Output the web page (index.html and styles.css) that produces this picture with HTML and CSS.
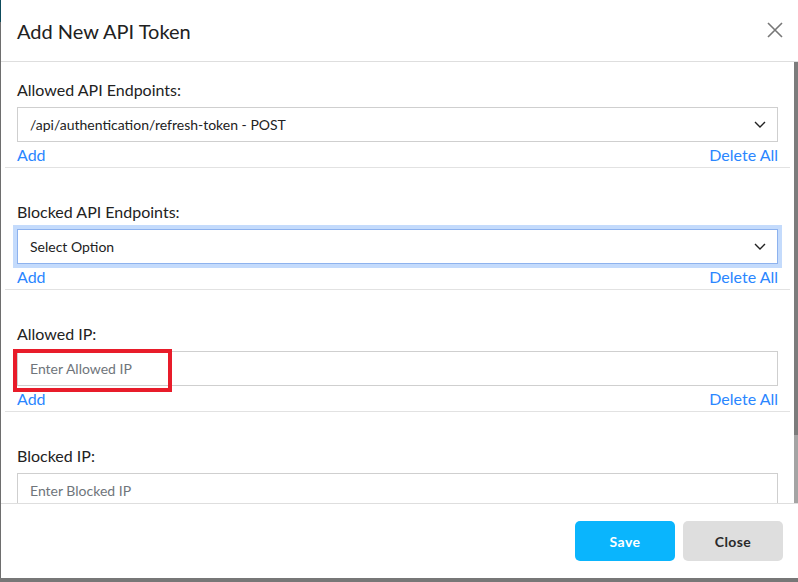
FILE: index.html
```html
<!DOCTYPE html>
<html>
<head>
<meta charset="utf-8">
<link rel="stylesheet" href="styles.css">
</head>
<body>
<div class="page">
  <div class="edge"></div>
  <div class="modal">
    <div class="header">
      <div class="title">Add New API Token</div>
      <svg class="close-x" width="16" height="16" viewBox="0 0 16 16"><path d="M1 1L15 15M15 1L1 15" stroke="#777" stroke-width="1.6" fill="none"/></svg>
    </div>
    <div class="body">
      <div class="content">
        <div class="group first">
          <div class="label">Allowed API Endpoints:</div>
          <div class="field select">
            <span class="value">/api/authentication/refresh-token - POST</span>
            <svg class="chev" width="12" height="7" viewBox="0 0 12 7"><path d="M1 1L6 6L11 1" stroke="#222" stroke-width="1.4" fill="none"/></svg>
          </div>
          <div class="links"><span class="link">Add</span><span class="link">Delete All</span></div>
        </div>
        <div class="group">
          <div class="label">Blocked API Endpoints:</div>
          <div class="field select focus">
            <span class="value">Select Option</span>
            <svg class="chev" width="12" height="7" viewBox="0 0 12 7"><path d="M1 1L6 6L11 1" stroke="#222" stroke-width="1.4" fill="none"/></svg>
          </div>
          <div class="links"><span class="link">Add</span><span class="link">Delete All</span></div>
        </div>
        <div class="group">
          <div class="label">Allowed IP:</div>
          <div class="field input">
            <span class="placeholder">Enter Allowed IP</span>
            <div class="highlight"></div>
          </div>
          <div class="links"><span class="link">Add</span><span class="link">Delete All</span></div>
        </div>
        <div class="group">
          <div class="label">Blocked IP:</div>
          <div class="field input">
            <span class="placeholder">Enter Blocked IP</span>
          </div>
        </div>
      </div>
      <div class="scrollbar"><div class="thumb"></div></div>
    </div>
    <div class="footer">
      <button class="btn save">Save</button>
      <button class="btn close">Close</button>
    </div>
  </div>
</div>
</body>
</html>
```
FILE: styles.css
```css
html, body {
  margin: 0;
  padding: 0;
}
body {
  width: 798px;
  height: 582px;
  overflow: hidden;
  background: #777777;
  font-family: Lato, "Liberation Sans", sans-serif;
  color: #222;
}
.page {
  display: flex;
  height: 578px;
}
.edge {
  width: 1px;
  background: linear-gradient(#0d4b5c 0, #0d4b5c 22px, #6e6e6e 22px);
}
.modal {
  width: 797px;
  height: 578px;
  background: #fff;
  display: flex;
  flex-direction: column;
}
.header {
  height: 61px;
  border-bottom: 1px solid #dedede;
  display: flex;
  align-items: center;
  justify-content: space-between;
  padding: 0 15px 0 16px;
  flex-shrink: 0;
}
.title {
  font-size: 20px;
  color: #212121;
  padding-top: 1px;
}
.close-x {
  margin-top: -2px;
}
.body {
  height: 441px;
  border-bottom: 1px solid #dedede;
  display: flex;
  flex-shrink: 0;
}
.content {
  flex: 1;
  overflow: hidden;
}
.scrollbar {
  width: 4px;
  background: #a4a4a4;
}
.thumb {
  height: 373px;
  background: #7c7c7c;
}
.group {
  margin: 0 4px;
  padding: 34px 12px 0;
  border-bottom: 1px solid #e2e2e2;
}
.group.first {
  padding-top: 18px;
}
.label {
  font-size: 16px;
  line-height: 20px;
  margin-bottom: 7px;
}
.field {
  box-sizing: border-box;
  height: 35px;
  border: 1px solid #cfcfcf;
  display: flex;
  align-items: center;
  padding: 0 11px 0 12px;
  font-size: 14px;
  position: relative;
}
.select {
  justify-content: space-between;
}
.focus {
  border-color: #8db2ee;
  box-shadow: 0 0 0 4px #c4dbfc;
}
.value {
  color: #222;
}
.placeholder {
  color: #6f757b;
}
.highlight {
  position: absolute;
  left: -5px;
  top: -3px;
  width: 151px;
  height: 35px;
  border: 4px solid #e81c2a;
}
.links {
  display: flex;
  justify-content: space-between;
  font-size: 16px;
  line-height: 25px;
}
.link {
  color: #2a86ff;
}
.footer {
  flex: 1;
  display: flex;
  justify-content: flex-end;
  align-items: center;
  gap: 8px;
  padding-right: 15px;
}
.btn {
  width: 100px;
  height: 40px;
  border: none;
  border-radius: 5px;
  font-family: Lato, "Liberation Sans", sans-serif;
  font-weight: 700;
  font-size: 14px;
  letter-spacing: 0.4px;
}
.save {
  background: #0ab5fd;
  color: #fff;
}
.close {
  background: #dedede;
  color: #2a2a2a;
}
```
